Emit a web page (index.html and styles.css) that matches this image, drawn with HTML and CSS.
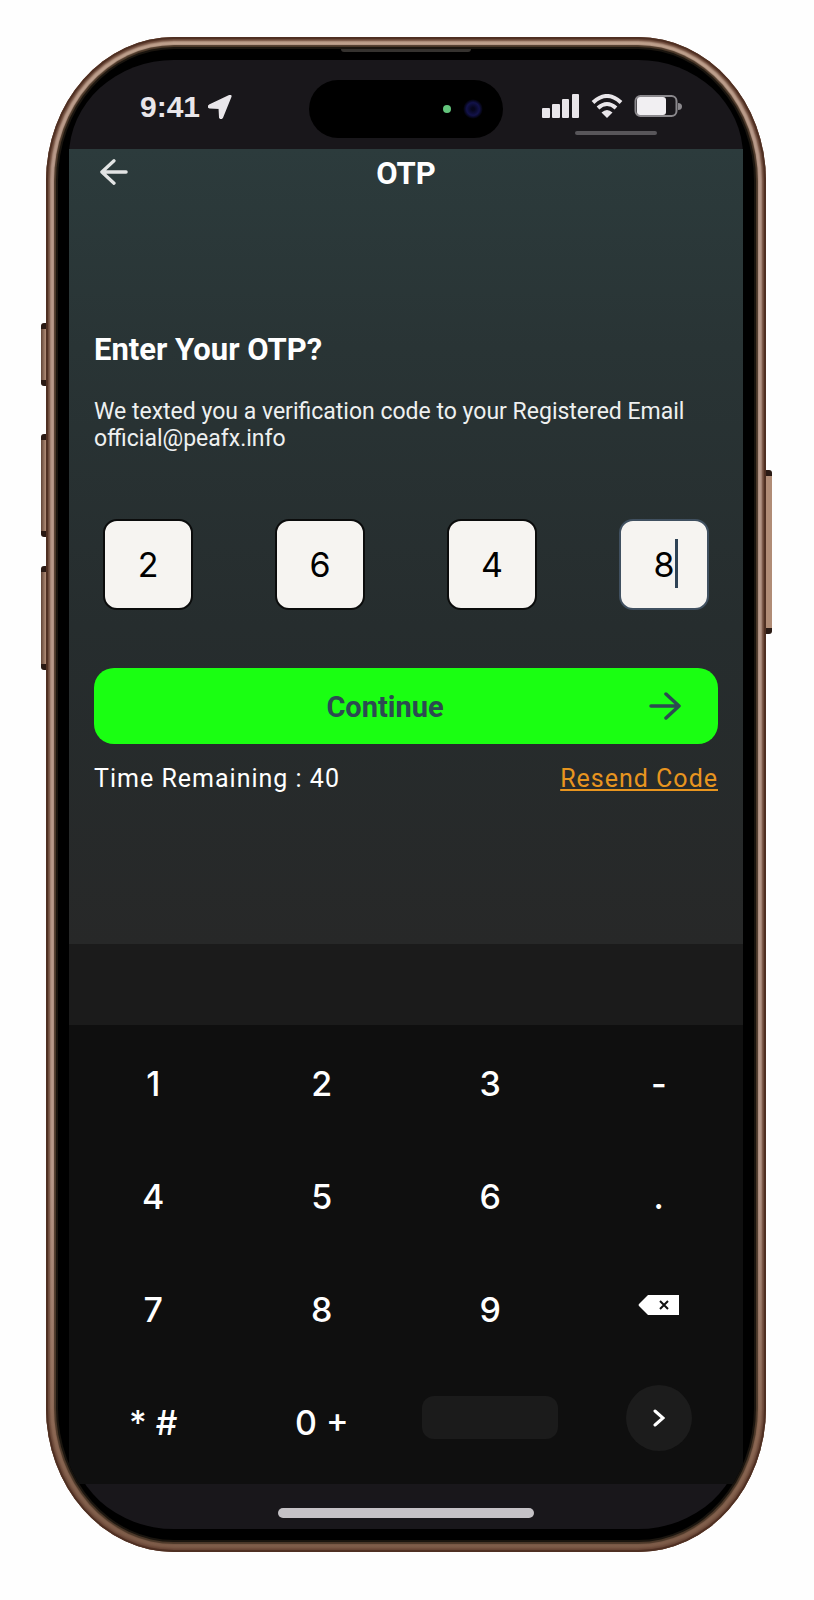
FILE: index.html
```html
<!DOCTYPE html>
<html lang="en">
<head>
<meta charset="utf-8">
<meta name="viewport" content="width=device-width, initial-scale=1">
<title>OTP</title>
<link rel="stylesheet" href="styles.css">
</head>
<body>
<div class="phone">
  <span class="side side-action"></span>
  <span class="side side-up"></span>
  <span class="side side-down"></span>
  <span class="side side-power"></span>
  <div class="bezel">
    <span class="speaker"></span>
    <div class="screen">
      <header class="status">
        <div class="clock">
          <span>9:41</span>
          <svg width="24" height="24" viewBox="0 0 24 24" aria-hidden="true"><path d="M22.500 1.500 14 22.500q-1 1.500-2 0L11.500 13 1.500 12.500q-1.500-1 0-2L21.500 1q1.500-.5 1 .5z" fill="#e9e6ea" stroke="#e9e6ea" stroke-width="2" stroke-linejoin="round"/></svg>
        </div>
        <div class="island"><span class="led"></span><span class="lens"></span></div>
        <div class="indicators">
          <svg width="38" height="24" viewBox="0 0 38 24" aria-hidden="true"><g fill="#e9e6ea"><rect x="0" y="14" width="8" height="10" rx="1"/><rect x="10" y="10" width="8" height="14" rx="1"/><rect x="20" y="5" width="7" height="19" rx="1"/><rect x="30" y="0" width="7" height="24" rx="1"/></g></svg>
          <svg width="32" height="24" viewBox="0 0 32 24" aria-hidden="true"><g fill="none" stroke="#e9e6ea" stroke-width="4"><path d="M2 8.500Q16-4.500 30 8.500"/><path d="M7 14Q16 6 25 14"/></g><path d="M10.500 18.500Q16 13.500 21.500 18.500L16 24z" fill="#e9e6ea"/></svg>
          <svg width="48" height="24" viewBox="0 0 48 24" aria-hidden="true"><rect x="1.500" y="2" width="41" height="20" rx="5" fill="none" stroke="#8b898d" stroke-width="2"/><rect x="3" y="3" width="29" height="18" rx="3" fill="#f1eff2"/><path d="M44 9q4 0 4 3.500T44 16z" fill="#8b898d"/></svg>
          <span class="privacy"></span>
        </div>
      </header>

      <main class="app">
        <div class="topbar">
          <button class="back" type="button" aria-label="Back"><svg width="30" height="28" viewBox="0 0 30 28"><path d="M28 14H2M15 2 2 14l13 12" fill="none" stroke="#e2e4e4" stroke-width="3.500" stroke-linecap="round" stroke-linejoin="round"/></svg></button>
          <h1 class="title">OTP</h1>
        </div>
        <form class="form">
          <h2 class="heading">Enter Your OTP?</h2>
          <p class="note">We texted you a verification code to your Registered Email<br>official@peafx.info</p>
          <div class="codes">
            <input class="code" type="text" inputmode="numeric" maxlength="1" value="2" aria-label="Digit 1">
            <input class="code" type="text" inputmode="numeric" maxlength="1" value="6" aria-label="Digit 2">
            <input class="code" type="text" inputmode="numeric" maxlength="1" value="4" aria-label="Digit 3">
            <div class="code-active">
              <input class="code code-focus" type="text" inputmode="numeric" maxlength="1" value="8" aria-label="Digit 4">
              <span class="caret"></span>
            </div>
          </div>
          <button class="continue" type="button">
            <span class="continue-label">Continue</span>
            <svg width="32" height="28" viewBox="0 0 32 28" aria-hidden="true"><path d="M2 14h28M17 2l13 12-13 12" fill="none" stroke="#2c4a51" stroke-width="3.500" stroke-linecap="round" stroke-linejoin="round"/></svg>
          </button>
          <div class="resend-row">
            <span>Time Remaining : 40</span>
            <a class="resend" href="#">Resend Code</a>
          </div>
        </form>
      </main>

      <div class="suggestions"></div>
      <div class="keypad">
        <button class="key" type="button">1</button>
        <button class="key" type="button">2</button>
        <button class="key" type="button">3</button>
        <button class="key" type="button">-</button>
        <button class="key" type="button">4</button>
        <button class="key" type="button">5</button>
        <button class="key" type="button">6</button>
        <button class="key" type="button">.</button>
        <button class="key" type="button">7</button>
        <button class="key" type="button">8</button>
        <button class="key" type="button">9</button>
        <button class="key key-icon" type="button" aria-label="Delete"><svg width="42" height="20" viewBox="0 0 42 20"><path d="M1 9 10 0h31v20H10L1 11q-1-1 0-2z" fill="#fff"/><path d="M22 6l8 8M30 6l-8 8" stroke="#111" stroke-width="2"/></svg></button>
        <button class="key" type="button">* #</button>
        <button class="key" type="button">0 +</button>
        <button class="key key-icon" type="button" aria-label="Space"><span class="space"></span></button>
        <button class="key key-icon" type="button" aria-label="Next"><span class="next"><svg width="12" height="18" viewBox="0 0 12 18"><path d="M2 2l8 7-8 7" fill="none" stroke="#fff" stroke-width="3" stroke-linecap="round" stroke-linejoin="miter"/></svg></span></button>
      </div>
      <footer class="home"><span class="home-bar"></span></footer>
    </div>
  </div>
</div>
</body>
</html>
```
FILE: styles.css
```css
* {
  box-sizing: border-box;
}

body {
  margin: 0;
  padding: 37px 48px 48px 46px;
  background: #fefefe;
  font-family: Roboto, "Liberation Sans", sans-serif;
  color: #fff;
}

button {
  border: 0;
  padding: 0;
  background: none;
  color: inherit;
  font: inherit;
}

/* Device shell */
.phone {
  position: relative;
  padding: 12px;
  border-radius: 128px / 144px;
  background: linear-gradient(#c0a28e, #b8998a 10%, #b8998a 75%, #8c6854 92%, #7d5c49);
  box-shadow:
    inset 0 0 1px 2px #4e2f22,
    inset 0 0 2px 4px #6d4a3a;
}

.side {
  position: absolute;
  z-index: -1;
  width: 12px;
  border-block: 6px solid #2a1a14;
  border-radius: 3px;
  background: linear-gradient(90deg, #5f4335, #b08c76 40%);
}

.side-action { left: -5px; top: 286px; height: 63px; }
.side-up { left: -5px; top: 397px; height: 103px; }
.side-down { left: -5px; top: 529px; height: 104px; }
.side-power { right: -6px; top: 433px; height: 164px; }

.bezel {
  position: relative;
  padding: 11px;
  overflow: hidden;
  border-radius: 116px / 132px;
  background: #000;
  box-shadow:
    0 0 0 2px #1a150f,
    0 0 1px 4px #4a3728;
}

.speaker {
  position: absolute;
  top: 0;
  left: 50%;
  width: 130px;
  height: 3px;
  margin-left: -65px;
  border-radius: 0 0 3px 3px;
  background: #35322f;
}

.screen {
  border-radius: 105px / 96px;
  background: #19171b;
}

/* Status bar */
.status {
  display: grid;
  grid-template-columns: 1fr 194px 1fr;
  height: 89px;
  padding-top: 20px;
}

.clock {
  display: flex;
  gap: 8px;
  height: 54px;
  padding-left: 71px;
  align-items: center;
  color: #e9e6ea;
  font: bold 30px/36px "Liberation Sans", sans-serif;
}

.island {
  display: flex;
  gap: 12px;
  height: 58px;
  padding-right: 20px;
  align-items: center;
  justify-content: flex-end;
  border-radius: 29px;
  background: #000;
}

.led {
  width: 8px;
  height: 8px;
  border-radius: 50%;
  background: #63c57c;
}

.lens {
  width: 20px;
  height: 20px;
  border-radius: 50%;
  background: radial-gradient(#06061c 10%, #12124a 45%, #000 70%);
}

.indicators {
  position: relative;
  display: flex;
  gap: 11px;
  height: 52px;
  padding-right: 61px;
  align-items: center;
  justify-content: flex-end;
}

.privacy {
  position: absolute;
  right: 86px;
  bottom: -3px;
  width: 82px;
  height: 4px;
  border-radius: 2px;
  background: #58565a;
}

/* App */
.app {
  height: 795px;
  padding: 0 25px;
  background: linear-gradient(#2c3b3c, #293435 25%, #262d2e 60%, #272828);
}

.topbar {
  display: grid;
  grid-template-columns: 40px 1fr 40px;
  height: 50px;
  align-items: center;
}

.back {
  display: flex;
  padding: 0 6px 4px;
}

.title {
  margin: 0;
  font-size: 31px;
  line-height: 36px;
  text-align: center;
}

.form {
  padding-top: 133px;
}

.heading {
  margin: 0;
  font-size: 31px;
  line-height: 36px;
}

.note {
  margin: 30px 0 0;
  color: #eef0f0;
  font-size: 23px;
  line-height: 27px;
}

.codes {
  display: flex;
  justify-content: space-between;
  margin-top: 67px;
  padding: 0 9px;
}

.code {
  display: block;
  width: 90px;
  height: 91px;
  padding: 0;
  border: 2px solid #0b0c0c;
  border-radius: 14px;
  outline: 0;
  background: #f6f4f1;
  color: #000;
  font: 34px/40px Inter, sans-serif;
  text-align: center;
}

.code-active {
  position: relative;
}

.code-focus {
  border-color: #405060;
}

.caret {
  position: absolute;
  top: 20px;
  left: 56px;
  width: 3px;
  height: 49px;
  background: #2f4356;
}

.continue {
  display: flex;
  width: 100%;
  height: 76px;
  margin-top: 58px;
  padding: 0 37px 0 27px;
  align-items: center;
  border-radius: 20px;
  background: #1aff12;
  color: #2c4a51;
  font-size: 29px;
  font-weight: bold;
  line-height: 36px;
}

.continue-label {
  flex: 1;
  padding-top: 2px;
  text-align: center;
}

.resend-row {
  display: flex;
  justify-content: space-between;
  margin-top: 20px;
  font-size: 25px;
  line-height: 30px;
  letter-spacing: 1px;
}

.resend {
  color: #e8951f;
  text-decoration-thickness: 2px;
  text-underline-offset: 2px;
}

/* Keyboard */
.suggestions {
  height: 81px;
  background: #1b1b1b;
}

.keypad {
  display: grid;
  grid-template-columns: repeat(4, 1fr);
  grid-auto-rows: 113px;
  height: 459px;
  background: #0f0f0f;
}

.key {
  padding-top: 4px;
  font: 500 34px/40px Inter, sans-serif;
}

.key-icon {
  display: flex;
  padding: 0 0 6px;
  align-items: center;
  justify-content: center;
}

.space {
  width: 136px;
  height: 43px;
  border-radius: 12px;
  background: #1b1b1b;
}

.next {
  display: flex;
  width: 66px;
  height: 66px;
  align-items: center;
  justify-content: center;
  border-radius: 50%;
  background: #1c1c1c;
}

.home {
  display: flex;
  height: 45px;
  align-items: center;
  justify-content: center;
  padding-top: 12px;
}

.home-bar {
  width: 256px;
  height: 10px;
  border-radius: 5px;
  background: #c5c2c6;
}
```
